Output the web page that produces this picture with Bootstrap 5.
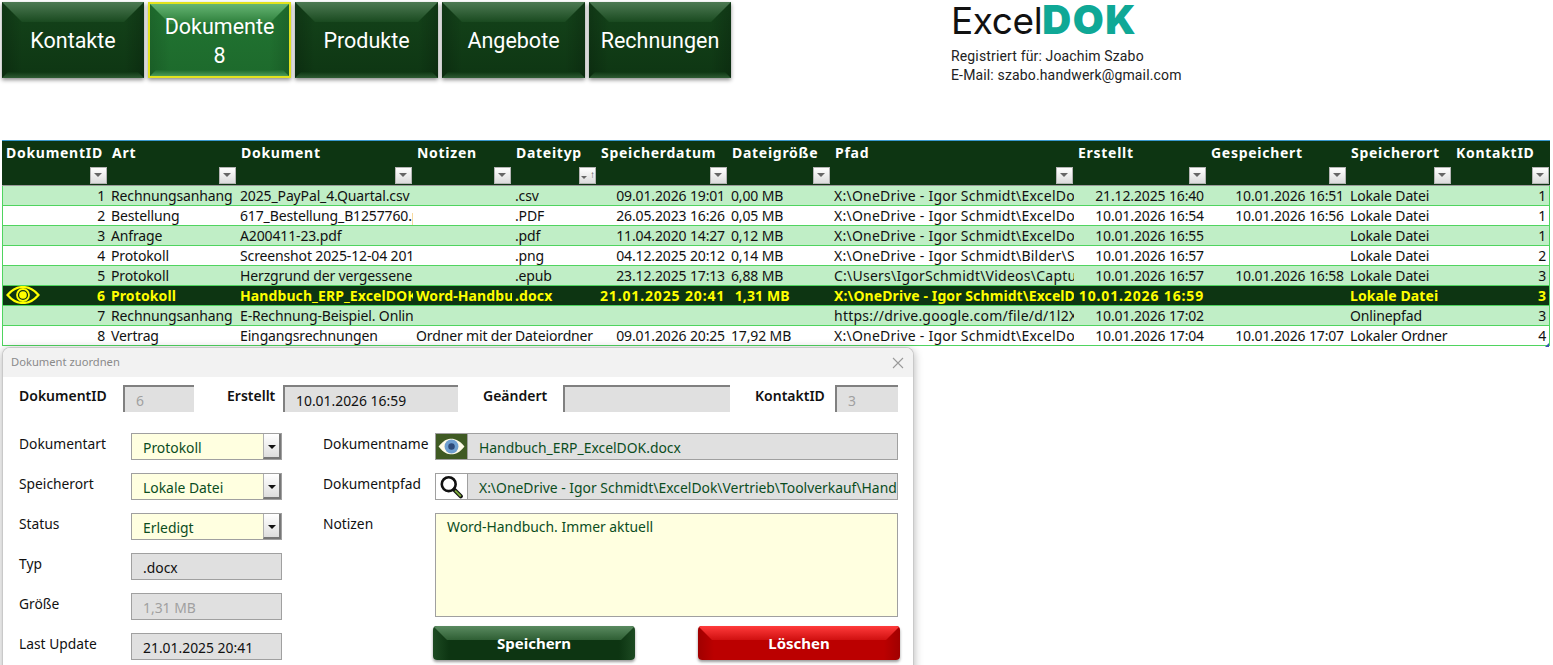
<!DOCTYPE html>
<html lang="de">
<head>
<meta charset="utf-8">
<title>ExcelDOK</title>
<link href="https://cdn.jsdelivr.net/npm/bootstrap@5.3.0/dist/css/bootstrap.min.css" rel="stylesheet">
<style>
html,body{height:100%;overflow:hidden;background:#fff}
body{font-family:"Noto Sans","Open Sans",sans-serif;font-size:14px;color:#111}
.page-top{height:140px;padding:2px 0 0 2px}
.tabs{width:949px}
.tab-btn{position:relative;width:142px;height:76px;padding:0 4px;border:0;border-radius:0;color:#fff;font-family:Roboto,sans-serif;font-size:21.5px;line-height:29px;background:linear-gradient(90deg,rgba(0,0,0,.18),transparent 20px,transparent calc(100% - 20px),rgba(0,0,0,.18)),linear-gradient(#14431a,#0e3613);box-shadow:0 2px 4px rgba(0,0,0,.45);overflow:hidden}
.tab-btn:hover,.tab-btn:active{color:#fff}
.tab-btn::before{content:"";position:absolute;left:0;right:0;top:0;height:20px;background:linear-gradient(#4d7a53,#1a4a20);clip-path:polygon(0 0,100% 0,calc(100% - 20px) 100%,20px 100%)}
.tab-btn::after{content:"";position:absolute;left:0;right:0;bottom:0;height:6px;background:linear-gradient(#0e3613,#2f5c34);clip-path:polygon(6px 0,calc(100% - 6px) 0,100% 100%,0 100%)}
.tab-label{position:relative;z-index:1;display:block}
.tab-w{width:143px}
.tab-on{width:143px;padding-top:2px;background:linear-gradient(90deg,rgba(0,0,0,.12),transparent 20px,transparent calc(100% - 20px),rgba(0,0,0,.12)),linear-gradient(#227532,#1d6a2c);border:2px solid #e2e21e}
.tab-on::before{background:linear-gradient(#66b573,#2b7d39)}
.tab-on::after{background:linear-gradient(#1d6a2c,#4b9a58)}
.brand{width:300px}
.brand-logo{font-family:Inter,sans-serif;font-size:37px;line-height:36px;letter-spacing:-.4px;color:#111;font-weight:400;height:43px;white-space:nowrap}
.brand-logo b{color:#0fa896;font-weight:900;letter-spacing:1.500px;font-size:40px}
.brand-text{font-family:Roboto,sans-serif;font-size:14px;line-height:19px;letter-spacing:.15px;color:#222;margin-top:2px}

.sheet-wrap{margin-left:2px;width:1548px}
.sheet{table-layout:fixed;width:1548px;margin:0;border-collapse:separate;border-spacing:0;font-size:14px;line-height:18px;--bs-table-bg:transparent}
.sheet th,.sheet td{padding:0 3px;white-space:nowrap;overflow:hidden;border:0;vertical-align:middle;box-sizing:border-box}
.sheet thead th{background:#0d3512;color:#fff;font-weight:700;height:46px;vertical-align:top;position:relative;font-size:14px;line-height:19px;letter-spacing:.72px;padding:2px 4px 0;border-top:1px solid #3a9ad0;border-bottom:1px solid #9a9a9a}
.flt{position:absolute;right:1px;bottom:1px;width:17px;height:17px;background:linear-gradient(#fff,#dcdcdc);border:1px solid #b5b5b5}
.flt::after{content:"";position:absolute;left:3px;top:5px;border-left:4.500px solid transparent;border-right:4.500px solid transparent;border-top:4.500px solid #666}
.flt-sort::after{left:1px;top:8px;border-left-width:3px;border-right-width:3px;border-top-width:3px}
.flt-sort::before{content:"↑";position:absolute;right:0;top:-1px;font-size:10px;font-weight:400;line-height:14px;letter-spacing:0;color:#555}
.sheet tbody td{height:20px;color:#111;border-bottom:1px solid #4fd45f;background:#fff;letter-spacing:-.14px}
.sheet tbody tr:nth-child(odd) td{background:#c0eec6}
.sheet tbody tr td:first-child{border-left:1px solid #4fd45f}
.sheet tbody tr td:last-child{border-right:1px solid #4fd45f}
.sheet tbody td.path{letter-spacing:.24px;padding-right:4px}
.sheet tbody tr.row-cur td{background:#0d3512;color:#ff0;font-weight:700;letter-spacing:.1px}
.sheet tbody tr.row-cur td.stamp{letter-spacing:.85px}
.eye-cur{position:absolute;left:3px;top:0}
.cell-id{position:relative}
.sheet-tick{position:absolute;left:1545px;top:343px;width:4px;height:4px;background:#3a55b0;clip-path:polygon(100% 0,100% 100%,0 100%)}

.dlg{margin-left:2px;margin-top:1px;width:912px;height:340px;background:#fff;border:1px solid #c9c9c9;border-bottom:0;border-radius:8px 8px 0 0;box-shadow:0 2px 10px rgba(0,0,0,.3);overflow:hidden}
.dlg-title{height:29px;background:#f2f2f2;padding:0 8px;font-size:11.200px;color:#8a8a8a}
.dlg-x{width:12px;height:12px;margin-right:1px}
.dlg-body{padding:8px 15px 0 16px}
.lbl{flex:none;font-size:13.800px;line-height:20px;color:#111;white-space:nowrap}
.lbl-b{font-weight:600;font-size:14px;padding-bottom:6px}
.fld{height:27px;min-width:0;display:flex;align-items:center;padding:2px 10px 0 11px;font-size:13.900px;line-height:20px;background:#e0e0e0;color:#111;white-space:nowrap;overflow:hidden;border:1px solid #a0a0a0;border-radius:0}
.fld-in{border:0;border-top:2px solid #808080;border-left:2px solid #808080}
.fld-off{color:#a0a0a0}
.fld-yl{background:#ffffe0;color:#0b4d1e}
.fld-gr{color:#0b4d1e}
.w-id{width:71px}.w-er{width:175px}.w-ge{width:167px}.w-ko{width:63px}.w-l{width:151px}
.top-row{height:27px}
.lab1{width:104px}.lab2{width:56px;margin-left:33px}.lab3{width:80px;margin-left:25px}.lab4{width:80px;margin-left:25px}
.form-cols{margin-top:21px}
.col-left{width:263px}
.col-right{margin-left:41px;width:575px}
.col-labs{width:112px}
.stack{gap:13px}
.combo{position:relative;padding-right:20px}
.combo-btn{position:absolute;right:0;top:0;bottom:0;width:18px;background:linear-gradient(#fff,#dedede);border-left:1px solid #b0b0b0;border-bottom:2px solid #777;border-right:2px solid #777}
.combo-btn::after{content:"";position:absolute;left:4px;top:11px;border-left:4px solid transparent;border-right:4px solid transparent;border-top:4px solid #111}
.row-lab{height:27px}
.row-lab .lbl{margin-top:1px}
.pic{width:32px;height:27px;flex:none;border:1px solid #a0a0a0;border-right:0;display:block}
.pic-eye{background:#3f5a23}
.pic-lens{background:#fff}
.note{height:104px;background:#ffffe0;border:1px solid #a0a0a0;color:#0b4d1e;padding:3px 11px;font-size:13.900px;line-height:20px}
.labs-r{flex:none;width:112px}
.gap-stack{margin-top:13px}
.note-lab{margin-top:1px}
.act{flex:none;margin-top:9px;width:467px;margin-left:-2px;display:flex;justify-content:space-between}
.act-btn{position:relative;width:202px;height:34px;padding:0;border:0;border-radius:4px;font-weight:700;font-size:15px;line-height:20px;color:#fff;overflow:hidden;box-shadow:0 2px 3px rgba(0,0,0,.4)}
.act-btn:hover,.act-btn:active{color:#fff}
.act-btn span{position:relative;z-index:1}
.act-btn::before{content:"";position:absolute;left:0;right:0;top:0;height:14px;clip-path:polygon(0 0,100% 0,calc(100% - 14px) 100%,14px 100%)}
.act-green{background:linear-gradient(90deg,#1d4a22,#0d3512 16px,#0d3512 calc(100% - 16px),#1d4a22)}
.act-green:hover,.act-green:active{background:#0d3512}
.act-green::before{background:linear-gradient(#5a8a60,#2f5f34)}
.act-red{background:linear-gradient(90deg,#a00000,#bb0000 16px,#bb0000 calc(100% - 16px),#a00000)}
.act-red:hover,.act-red:active{background:#bb0000}
.act-red::before{background:linear-gradient(#ff3b3b,#d01010)}
</style>
</head>
<body>
<header class="page-top d-flex align-items-start">
  <nav class="tabs d-flex gap-1">
    <button type="button" class="btn tab-btn"><span class="tab-label">Kontakte</span></button>
    <button type="button" class="btn tab-btn tab-on"><span class="tab-label">Dokumente<br>8</span></button>
    <button type="button" class="btn tab-btn tab-w"><span class="tab-label">Produkte</span></button>
    <button type="button" class="btn tab-btn tab-w"><span class="tab-label">Angebote</span></button>
    <button type="button" class="btn tab-btn"><span class="tab-label">Rechnungen</span></button>
  </nav>
  <div class="brand">
    <div class="brand-logo">Excel<b>DOK</b></div>
    <div class="brand-text">Registriert für: Joachim Szabo<br>E-Mail: szabo.handwerk@gmail.com</div>
  </div>
</header>

<div class="sheet-wrap">
<table class="table sheet">
  <colgroup><col style="width:106px"><col style="width:129px"><col style="width:176px"><col style="width:99px"><col style="width:85px"><col style="width:131px"><col style="width:103px"><col style="width:243px"><col style="width:133px"><col style="width:140px"><col style="width:105px"><col style="width:98px"></colgroup>
  <thead><tr>
    <th>DokumentID<span class="flt"></span></th><th>Art<span class="flt"></span></th><th>Dokument<span class="flt"></span></th><th>Notizen<span class="flt"></span></th><th>Dateityp<span class="flt flt-sort"></span></th><th>Speicherdatum<span class="flt"></span></th><th>Dateigröße<span class="flt"></span></th><th>Pfad<span class="flt"></span></th><th>Erstellt<span class="flt"></span></th><th>Gespeichert<span class="flt"></span></th><th>Speicherort<span class="flt"></span></th><th>KontaktID<span class="flt"></span></th>
  </tr></thead>
  <tbody>
    <tr><td class="text-end">1</td><td>Rechnungsanhang</td><td>2025_PayPal_4.Quartal.csv</td><td></td><td>.csv</td><td class="text-end">09.01.2026 19:01</td><td>0,00 MB</td><td class="path">X:\OneDrive - Igor Schmidt\ExcelDok\Vertrieb</td><td class="text-end">21.12.2025 16:40</td><td class="text-end">10.01.2026 16:51</td><td>Lokale Datei</td><td class="text-end">1</td></tr>
    <tr><td class="text-end">2</td><td>Bestellung</td><td>617_Bestellung_B1257760.pdf</td><td></td><td>.PDF</td><td class="text-end">26.05.2023 16:26</td><td>0,05 MB</td><td class="path">X:\OneDrive - Igor Schmidt\ExcelDok\Vertrieb</td><td class="text-end">10.01.2026 16:54</td><td class="text-end">10.01.2026 16:56</td><td>Lokale Datei</td><td class="text-end">1</td></tr>
    <tr><td class="text-end">3</td><td>Anfrage</td><td>A200411-23.pdf</td><td></td><td>.pdf</td><td class="text-end">11.04.2020 14:27</td><td>0,12 MB</td><td class="path">X:\OneDrive - Igor Schmidt\ExcelDok\Vertrieb</td><td class="text-end">10.01.2026 16:55</td><td></td><td>Lokale Datei</td><td class="text-end">1</td></tr>
    <tr><td class="text-end">4</td><td>Protokoll</td><td>Screenshot 2025-12-04 201200.png</td><td></td><td>.png</td><td class="text-end">04.12.2025 20:12</td><td>0,14 MB</td><td class="path">X:\OneDrive - Igor Schmidt\Bilder\Screenshots</td><td class="text-end">10.01.2026 16:57</td><td></td><td>Lokale Datei</td><td class="text-end">2</td></tr>
    <tr><td class="text-end">5</td><td>Protokoll</td><td>Herzgrund der vergessenen</td><td></td><td>.epub</td><td class="text-end">23.12.2025 17:13</td><td>6,88 MB</td><td class="path">C:\Users\IgorSchmidt\Videos\Captures\Herz</td><td class="text-end">10.01.2026 16:57</td><td class="text-end">10.01.2026 16:58</td><td>Lokale Datei</td><td class="text-end">3</td></tr>
    <tr class="row-cur"><td class="text-end cell-id"><svg class="eye-cur" width="34" height="18" viewBox="0 0 34 18" aria-hidden="true"><path d="M1.500 9C7 2.500 12 1 17 1s10 1.500 15.500 8C27 15.500 22 17 17 17S7 15.500 1.500 9Z" fill="none" stroke="#ff0" stroke-width="2.200"/><circle cx="17" cy="9" r="6" fill="none" stroke="#ff0" stroke-width="1.800"/><circle cx="17" cy="9" r="3.800" fill="#ff0"/></svg>6</td><td>Protokoll</td><td>Handbuch_ERP_ExcelDOK.docx</td><td>Word-Handbuch. Immer aktuell</td><td>.docx</td><td class="text-end stamp">21.01.2025 20:41</td><td>&nbsp;1,31 MB</td><td class="path">X:\OneDrive - Igor Schmidt\ExcelDok\Vertrieb</td><td class="text-end stamp">10.01.2026 16:59</td><td></td><td>Lokale Datei</td><td class="text-end">3</td></tr>
    <tr><td class="text-end">7</td><td>Rechnungsanhang</td><td>E-Rechnung-Beispiel. Online</td><td></td><td></td><td></td><td></td><td class="path">https://drive.google.com/file/d/1l2X9abcDeFg</td><td class="text-end">10.01.2026 17:02</td><td></td><td>Onlinepfad</td><td class="text-end">3</td></tr>
    <tr><td class="text-end">8</td><td>Vertrag</td><td>Eingangsrechnungen</td><td>Ordner mit den Rechnungen</td><td>Dateiordner</td><td class="text-end">09.01.2026 20:25</td><td>17,92 MB</td><td class="path">X:\OneDrive - Igor Schmidt\ExcelDok\Vertrieb</td><td class="text-end">10.01.2026 17:04</td><td class="text-end">10.01.2026 17:07</td><td>Lokaler Ordner</td><td class="text-end">4</td></tr>
  </tbody>
</table>
<span class="sheet-tick"></span>
</div>

<section class="dlg">
  <div class="dlg-title d-flex align-items-center justify-content-between">
    <span>Dokument zuordnen</span>
    <svg class="dlg-x" viewBox="0 0 12 12" aria-hidden="true"><path d="M1 1l10 10M11 1L1 11" stroke="#9a9a9a" stroke-width="1.100" fill="none"/></svg>
  </div>
  <div class="dlg-body">
    <div class="top-row d-flex align-items-center">
      <span class="lbl lbl-b lab1">DokumentID</span><div class="fld fld-in fld-off w-id">6</div>
      <span class="lbl lbl-b lab2">Erstellt</span><div class="fld fld-in w-er">10.01.2026 16:59</div>
      <span class="lbl lbl-b lab3">Geändert</span><div class="fld fld-in w-ge"></div>
      <span class="lbl lbl-b lab4">KontaktID</span><div class="fld fld-in fld-off w-ko">3</div>
    </div>
    <div class="form-cols d-flex">
      <div class="col-left d-flex flex-column stack">
        <div class="d-flex row-lab"><span class="lbl col-labs">Dokumentart</span><div class="fld fld-yl combo w-l">Protokoll<span class="combo-btn"></span></div></div>
        <div class="d-flex row-lab"><span class="lbl col-labs">Speicherort</span><div class="fld fld-yl combo w-l">Lokale Datei<span class="combo-btn"></span></div></div>
        <div class="d-flex row-lab"><span class="lbl col-labs">Status</span><div class="fld fld-yl combo w-l">Erledigt<span class="combo-btn"></span></div></div>
        <div class="d-flex row-lab"><span class="lbl col-labs">Typ</span><div class="fld w-l">.docx</div></div>
        <div class="d-flex row-lab"><span class="lbl col-labs">Größe</span><div class="fld fld-off w-l">1,31 MB</div></div>
        <div class="d-flex row-lab"><span class="lbl col-labs">Last Update</span><div class="fld w-l">21.01.2025 20:41</div></div>
      </div>
      <div class="col-right d-flex flex-column">
        <div class="d-flex row-lab"><span class="lbl labs-r">Dokumentname</span>
          <svg class="pic pic-eye" viewBox="0 0 32 27" aria-hidden="true"><path d="M2 13.500C8 6 12 5 16 5s9 2 14 8.500c-5 6.500-10 8.500-14 8.500S8 21 2 13.500Z" fill="#fffbe8"/><circle cx="16" cy="13.500" r="7.500" fill="#6f9fd0"/><circle cx="16" cy="13.500" r="3.500" fill="#2d4a78"/></svg>
          <div class="fld fld-gr flex-grow-1">Handbuch_ERP_ExcelDOK.docx</div></div>
        <div class="d-flex row-lab gap-stack"><span class="lbl labs-r">Dokumentpfad</span>
          <svg class="pic pic-lens" viewBox="0 0 32 27" aria-hidden="true"><circle cx="13" cy="11" r="7.500" fill="#fff" stroke="#111" stroke-width="2.800"/><path d="M19 17l7 7" stroke="#111" stroke-width="4.500" stroke-linecap="round"/><path d="M20.500 18.500l5 5" stroke="#7aa83a" stroke-width="2.200" stroke-linecap="round"/></svg>
          <div class="fld fld-gr flex-grow-1">X:\OneDrive - Igor Schmidt\ExcelDok\Vertrieb\Toolverkauf\Handbuch_ERP_ExcelDOK.docx</div></div>
        <div class="d-flex gap-stack"><span class="lbl labs-r note-lab">Notizen</span><div class="note flex-grow-1">Word-Handbuch. Immer aktuell</div></div>
        <div class="d-flex"><span class="labs-r"></span>
          <div class="act">
            <button type="button" class="btn act-btn act-green"><span>Speichern</span></button>
            <button type="button" class="btn act-btn act-red"><span>Löschen</span></button>
          </div>
        </div>
      </div>
    </div>
  </div>
</section>
<script src="https://cdn.jsdelivr.net/npm/bootstrap@5.3.0/dist/js/bootstrap.bundle.min.js"></script>
</body>
</html>
